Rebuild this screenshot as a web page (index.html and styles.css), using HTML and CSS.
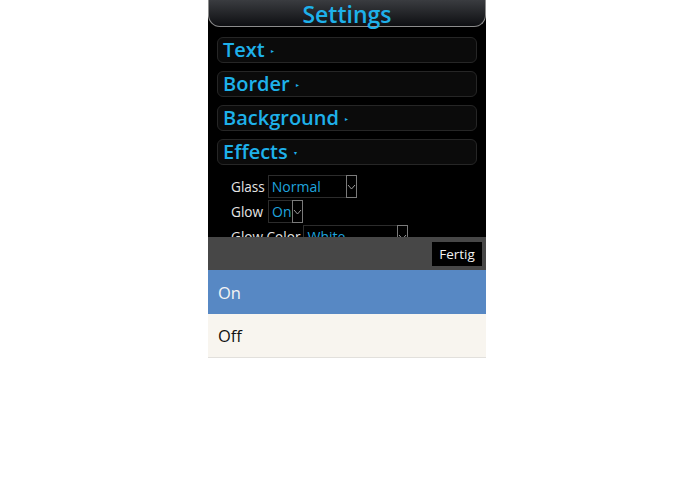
FILE: index.html
```html
<!DOCTYPE html>
<html>
<head>
<meta charset="utf-8">
<link rel="stylesheet" href="styles.css">
</head>
<body>
<div class="phone">
  <div class="screen">
    <header class="header"><h1 class="title">Settings</h1></header>
    <div class="sections">
      <div class="section"><span class="section-name">Text</span><span class="caret">&#9656;</span></div>
      <div class="section"><span class="section-name">Border</span><span class="caret">&#9656;</span></div>
      <div class="section"><span class="section-name">Background</span><span class="caret">&#9656;</span></div>
      <div class="section"><span class="section-name">Effects</span><span class="caret">&#9662;</span></div>
    </div>
    <div class="fields">
      <div class="field">
        <span class="label">Glass</span>
        <div class="select select-glass"><span class="value">Normal</span><span class="arrow"><svg width="9" height="6" viewBox="0 0 9 6"><path d="M1 1 L4.5 5 L8 1" fill="none" stroke="#9a9a9a" stroke-width="1"/></svg></span></div>
      </div>
      <div class="field">
        <span class="label">Glow</span>
        <div class="select select-glow"><span class="value">On</span><span class="arrow"><svg width="9" height="6" viewBox="0 0 9 6"><path d="M1 1 L4.5 5 L8 1" fill="none" stroke="#9a9a9a" stroke-width="1"/></svg></span></div>
      </div>
      <div class="field">
        <span class="label">Glow Color</span>
        <div class="select select-color"><span class="value">White</span><span class="arrow"><svg width="9" height="6" viewBox="0 0 9 6"><path d="M1 1 L4.5 5 L8 1" fill="none" stroke="#9a9a9a" stroke-width="1"/></svg></span></div>
      </div>
    </div>
  </div>
  <div class="picker">
    <div class="toolbar"><button class="done">Fertig</button></div>
    <ul class="options">
      <li class="option selected">On</li>
      <li class="option">Off</li>
    </ul>
  </div>
</div>
</body>
</html>
```
FILE: styles.css
```css
html, body {
  margin: 0;
  padding: 0;
  background: #ffffff;
}
body {
  font-family: "Open Sans", "Noto Sans", sans-serif;
}
.phone {
  width: 278px;
  margin-left: 208px;
}
.screen {
  height: 237px;
  overflow: hidden;
  background: #000;
}
.header {
  height: 27px;
  box-sizing: border-box;
  border: 1px solid #8c8c8c;
  border-top: none;
  border-radius: 0 0 12px 12px;
  background: linear-gradient(#3a3c40, #0e0f12);
  display: flex;
  justify-content: center;
  align-items: center;
}
.title {
  margin: 0;
  font-size: 23px;
  font-weight: 600;
  color: #1eb1ea;
  line-height: 26px;
  position: relative;
  top: 1px;
}
.sections {
  display: flex;
  flex-direction: column;
  gap: 8px;
  padding: 10px 9px 0;
}
.section {
  height: 26px;
  box-sizing: border-box;
  border: 1px solid #262626;
  border-radius: 6px;
  background: #0b0b0b;
  display: flex;
  align-items: center;
  padding-left: 5px;
}
.section-name {
  font-size: 20px;
  font-weight: 600;
  color: #1eb1ea;
  line-height: 24px;
}
.caret {
  font-size: 6px;
  color: #1eb1ea;
  margin-left: 6px;
  margin-top: 2px;
}
.fields {
  display: flex;
  flex-direction: column;
  gap: 2px;
  padding: 10px 0 0 23px;
}
.field {
  display: flex;
  align-items: center;
  gap: 3px;
}
.label {
  font-size: 13.6px;
  color: #e6e6e6;
  line-height: 20px;
}
.select {
  height: 23px;
  box-sizing: border-box;
  border: 1px solid #2c2c2c;
  display: flex;
  align-items: stretch;
  background: #000;
}
.select-glass { width: 89px; }
.select-glow { width: 35px; margin-left: 2px; }
.select-color { width: 105px; }
.value {
  flex: 1;
  font-size: 14px;
  color: #1fa4de;
  padding-left: 3px;
  line-height: 21px;
}
.arrow {
  width: 11px;
  box-sizing: border-box;
  border: 1px solid #7a7a7a;
  display: flex;
  justify-content: center;
  align-items: center;
  margin: -1px -1px -1px 0;
}
.picker {
  background: #fff;
}
.toolbar {
  height: 33px;
  background: #474747;
  display: flex;
  justify-content: flex-end;
  align-items: center;
  padding-right: 4px;
}
.done {
  width: 50px;
  height: 24px;
  border: none;
  background: #000;
  color: #f2f2f2;
  font-family: "Open Sans", "Noto Sans", sans-serif;
  font-size: 13.5px;
  padding: 0;
}
.options {
  list-style: none;
  margin: 0;
  padding: 0;
}
.option {
  height: 43px;
  display: flex;
  align-items: center;
  padding-left: 10px;
  font-size: 16.5px;
  color: #111;
  background: #f8f5ef;
  border-bottom: 1px solid #e2e0dc;
}
.option.selected {
  height: 44px;
  background: #5788c4;
  color: #f4f4f4;
  border-bottom: none;
}
```
